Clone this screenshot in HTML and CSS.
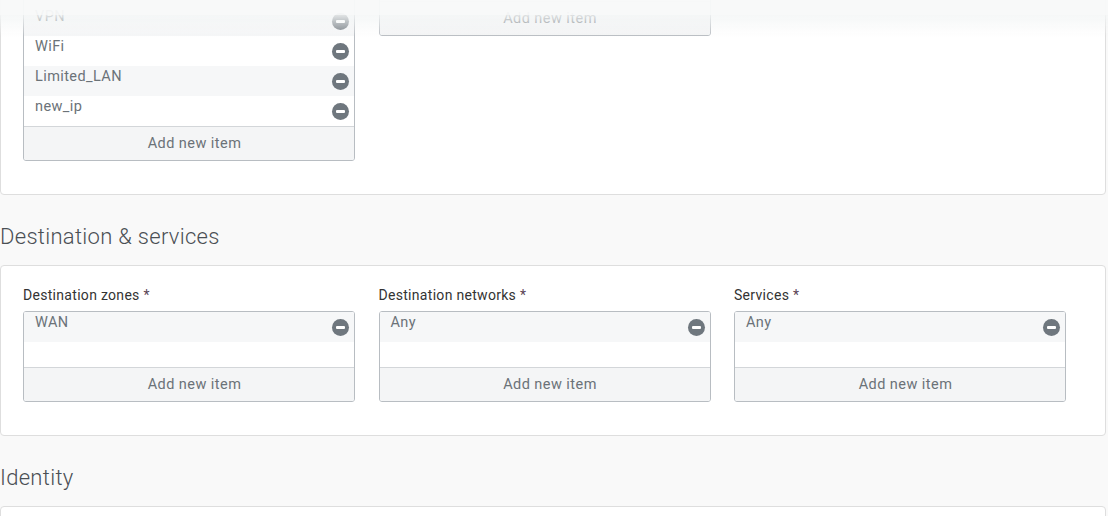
FILE: index.html
```html
<!DOCTYPE html>
<html lang="en">
  <head>
    <meta charset="UTF-8" />
    <meta name="viewport" content="width=device-width, initial-scale=1.0" />
    <title>Firewall rule</title>
    <link rel="stylesheet" href="styles.css">
  </head>
  <body>
    <div class="top-bar"></div>

    <main class="page">
      <section class="card card-first">
        <div class="field-grid">
          <div class="field">
            <label class="field-label">Source zones <span class="req">*</span></label>
            <div class="list-box">
              <ul class="list-rows">
                <li class="list-row"><span>LAN</span><button class="remove-btn" aria-label="Remove"></button></li>
                <li class="list-row"><span>DMZ</span><button class="remove-btn" aria-label="Remove"></button></li>
                <li class="list-row"><span>VPN</span><button class="remove-btn" aria-label="Remove"></button></li>
                <li class="list-row"><span>WiFi</span><button class="remove-btn" aria-label="Remove"></button></li>
                <li class="list-row"><span>Limited_LAN</span><button class="remove-btn" aria-label="Remove"></button></li>
                <li class="list-row"><span>new_ip</span><button class="remove-btn" aria-label="Remove"></button></li>
              </ul>
              <div class="list-footer">Add new item</div>
            </div>
          </div>
          <div class="field">
            <label class="field-label">Source networks and devices <span class="req">*</span></label>
            <div class="list-box">
              <ul class="list-rows">
                <li class="list-row"><span>Any</span><button class="remove-btn" aria-label="Remove"></button></li>
              </ul>
              <div class="list-footer">Add new item</div>
            </div>
          </div>
        </div>
      </section>

      <h2 class="section-title">Destination &amp; services</h2>
      <section class="card">
        <div class="field-grid">
          <div class="field">
            <label class="field-label">Destination zones <span class="req">*</span></label>
            <div class="list-box">
              <ul class="list-rows">
                <li class="list-row"><span>WAN</span><button class="remove-btn" aria-label="Remove"></button></li>
              </ul>
              <div class="list-footer">Add new item</div>
            </div>
          </div>
          <div class="field">
            <label class="field-label">Destination networks <span class="req">*</span></label>
            <div class="list-box">
              <ul class="list-rows">
                <li class="list-row"><span>Any</span><button class="remove-btn" aria-label="Remove"></button></li>
              </ul>
              <div class="list-footer">Add new item</div>
            </div>
          </div>
          <div class="field">
            <label class="field-label">Services <span class="req">*</span></label>
            <div class="list-box">
              <ul class="list-rows">
                <li class="list-row"><span>Any</span><button class="remove-btn" aria-label="Remove"></button></li>
              </ul>
              <div class="list-footer">Add new item</div>
            </div>
          </div>
        </div>
      </section>

      <h2 class="section-title">Identity</h2>
      <section class="card card-last"></section>
    </main>
  </body>
</html>
```

FILE: styles.css
```css
* {
  margin: 0;
  padding: 0;
  box-sizing: border-box;
  font-family: Roboto, "Liberation Sans", sans-serif;
}

:root {
  --page: #f9f9f9;
  --card-border: #dedede;
  --box-border: #b8bdc2;
  --row-alt: #f6f7f8;
  --footer: #f4f5f6;
  --muted: #6b7278;
  --icon: #6f777e;
}

body {
  background: var(--page);
  color: #333;
}

/* Sticky header shadow */
.top-bar {
  position: fixed;
  top: 0;
  left: 0;
  width: 100%;
  height: 15px;
  background: rgba(248, 249, 249, 0.96);
  z-index: 10;
}

.top-bar::after {
  content: "";
  position: absolute;
  top: 15px;
  left: 0;
  width: 100%;
  height: 22px;
  background: linear-gradient(rgba(244, 246, 246, 0.85), rgba(255, 255, 255, 0));
}

.page {
  margin-top: -101px;
  margin-right: 2px;
}

/* Cards */
.card {
  background: #fff;
  border: 1px solid var(--card-border);
  border-radius: 4px;
  padding: 20px 0 33px 22px;
}

.card-last {
  height: 40px;
}

.section-title {
  font-size: 22px;
  font-weight: 300;
  line-height: 30px;
  letter-spacing: 0.3px;
  color: #4a4f54;
  margin: 27px 0 13px;
}

.field-grid {
  display: grid;
  grid-template-columns: repeat(3, 332px);
  column-gap: 23.5px;
  align-items: start;
}

.field-label {
  display: block;
  font-size: 14px;
  line-height: 18px;
  letter-spacing: 0.3px;
  color: #333;
  margin-bottom: 7px;
}

.req {
  color: #5a4455;
}

/* List boxes */
.list-box {
  border: 1px solid var(--box-border);
  border-radius: 3px;
  overflow: hidden;
}

.list-rows {
  list-style: none;
  min-height: 55px;
  background: #fff;
}

.list-row {
  display: flex;
  justify-content: space-between;
  align-items: center;
  height: 30px;
  padding: 0 5px 0 11px;
  font-size: 14.5px;
  letter-spacing: 0.4px;
  color: var(--muted);
}

.list-row span {
  align-self: flex-start;
  line-height: 22px;
}

.list-row:nth-child(odd) {
  background: var(--row-alt);
}

.remove-btn {
  position: relative;
  width: 17px;
  height: 17px;
  border: none;
  border-radius: 50%;
  background: var(--icon);
  cursor: pointer;
}

.remove-btn::after {
  content: "";
  position: absolute;
  left: 4px;
  top: 7px;
  width: 9px;
  height: 3px;
  border-radius: 1px;
  background: #fff;
}

.list-footer {
  height: 34px;
  line-height: 33px;
  padding-left: 11px;
  text-align: center;
  font-size: 14.5px;
  letter-spacing: 0.45px;
  color: var(--muted);
  background: var(--footer);
  border-top: 1px solid #d3d6d9;
}
```
